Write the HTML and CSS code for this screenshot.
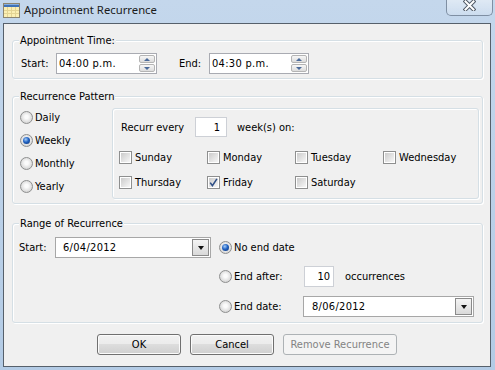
FILE: index.html
```html
<!DOCTYPE html>
<html lang="en">
<head>
  <meta charset="UTF-8">
  <title>Appointment Recurrence</title>
  <link rel="stylesheet" href="styles.css">
</head>
<body>

<div class="window">
  <div class="titlebar">
    <svg class="app-icon" width="17" height="15" viewBox="0 0 17 15">
      <rect x="0.5" y="0.5" width="16" height="14" fill="#fbefb4" stroke="#8c8571"/>
      <rect x="1" y="1" width="15" height="3" fill="#3f72b8"/>
      <rect x="1" y="1" width="15" height="1" fill="#86aede"/>
      <path d="M1 7.5H16M1 10.5H16M4.5 4V14M8.5 4V14M12.5 4V14" stroke="#e4d494" stroke-width="1"/>
    </svg>
    <span class="title">Appointment Recurrence</span>
    <div class="close-btn">
      <svg width="13" height="11" viewBox="0 0 13 11">
        <path d="M2.5 1.5L10.5 9.5M10.5 1.5L2.5 9.5" stroke="#4f5864" stroke-width="4" stroke-linecap="square"/>
        <path d="M2.5 1.5L10.5 9.5M10.5 1.5L2.5 9.5" stroke="#ffffff" stroke-width="2" stroke-linecap="square"/>
      </svg>
    </div>
  </div>

  <div class="client">
    <div class="group group-time">
      <span class="legend">Appointment Time:</span>
      <div class="time-row">
        <span class="lbl-start">Start:</span>
        <div class="spin-box">
          <span class="spin-text">04:00 p.m.</span>
          <div class="spinner"><span class="spin-btn spin-up"></span><span class="spin-btn spin-down"></span></div>
        </div>
        <span class="lbl-end">End:</span>
        <div class="spin-box spin-box-end">
          <span class="spin-text">04:30 p.m.</span>
          <div class="spinner"><span class="spin-btn spin-up"></span><span class="spin-btn spin-down"></span></div>
        </div>
      </div>
    </div>

    <div class="group group-pattern">
      <span class="legend">Recurrence Pattern</span>
      <div class="pattern-list">
        <div class="option"><span class="radio"></span>Daily</div>
        <div class="option"><span class="radio on"></span>Weekly</div>
        <div class="option"><span class="radio"></span>Monthly</div>
        <div class="option"><span class="radio"></span>Yearly</div>
      </div>
      <div class="weekly-box">
        <div class="recur-row">
          <span class="recur-label">Recurr every</span>
          <span class="num-box num-weeks">1</span>
          <span class="recur-after">week(s) on:</span>
        </div>
        <div class="days">
          <div class="day"><span class="check"></span>Sunday</div>
          <div class="day"><span class="check"></span>Monday</div>
          <div class="day"><span class="check"></span>Tuesday</div>
          <div class="day"><span class="check"></span>Wednesday</div>
          <div class="day"><span class="check"></span>Thursday</div>
          <div class="day"><span class="check">
            <svg width="9" height="9" viewBox="0 0 9 9"><path d="M1.2 4.6L3.4 7.6L7.9 0.9" fill="none" stroke="#2f4f86" stroke-width="1.6"/></svg>
          </span>Friday</div>
          <div class="day"><span class="check"></span>Saturday</div>
        </div>
      </div>
    </div>

    <div class="group group-range">
      <span class="legend">Range of Recurrence</span>
      <div class="range-start">
        <span class="lbl-range">Start:</span>
        <div class="combo combo-start"><span class="combo-text">6/04/2012</span><span class="combo-btn"></span></div>
      </div>
      <div class="range-end">
        <div class="option end-row"><span class="radio on"></span>No end date</div>
        <div class="end-row end-after">
          <div class="option end-label"><span class="radio"></span>End after:</div>
          <span class="num-box num-count">10</span>
          <span class="occ">occurrences</span>
        </div>
        <div class="end-row end-date">
          <div class="option end-label"><span class="radio"></span>End date:</div>
          <div class="combo combo-end"><span class="combo-text">8/06/2012</span><span class="combo-btn"></span></div>
        </div>
      </div>
    </div>

    <div class="buttons">
      <button class="btn btn-ok">OK</button>
      <button class="btn btn-cancel">Cancel</button>
      <button class="btn btn-remove" disabled>Remove Recurrence</button>
    </div>
  </div>
</div>

</body>
</html>
```

FILE: styles.css
```css
body {
  margin: 0;
  font-family: "DejaVu Sans Condensed", "Liberation Sans", sans-serif;
  font-size: 11px;
  color: #000;
}
.window {
  width: 495px;
  height: 370px;
  background: linear-gradient(#c4d7ec, #b3cbe5);
  display: flex;
  flex-direction: column;
}
.titlebar {
  height: 23px;
  flex-shrink: 0;
  display: flex;
  align-items: flex-start;
}
.app-icon {
  margin: 3px 0 0 3px;
}
.title {
  margin: 2px 0 0 4px;
  font-family: "Noto Sans", sans-serif;
  font-size: 11.3px;
  line-height: 16px;
  color: #1b1b1b;
}
.close-btn {
  margin-left: auto;
  margin-right: 2px;
  width: 47px;
  height: 16px;
  box-sizing: border-box;
  border: 1px solid #7f8fa3;
  border-top: none;
  border-radius: 0 0 5px 5px;
  background: linear-gradient(rgba(255,255,255,0.45), rgba(255,255,255,0.15));
  display: flex;
  justify-content: center;
}
.client {
  margin: 0 4px 0 3px;
  height: 344px;
  box-sizing: border-box;
  border: 1px solid #56606b;
  background: #f0f0f0;
  display: flex;
  flex-direction: column;
}

/* group boxes */
.group {
  position: relative;
  box-sizing: border-box;
  margin: 0 7px 0 8px;
  border: 1px solid #d5dfe5;
  border-radius: 3px;
  box-shadow: inset 1px 1px 0 #fff, 1px 1px 0 #fff;
}
.legend {
  position: absolute;
  top: -7px;
  left: 6px;
  padding: 0 1px;
  line-height: 13px;
  background: #f0f0f0;
}
.group-time {
  margin-top: 16px;
  height: 39px;
  padding: 12px 0 0 8px;
}
.group-pattern {
  margin-top: 17px;
  height: 108px;
  padding: 9px 8px 0 7px;
  display: flex;
}
.group-range {
  margin-top: 19px;
  height: 100px;
  padding: 13px 8px 0 6px;
  display: flex;
}

/* appointment time */
.time-row {
  display: flex;
  align-items: center;
  height: 21px;
}
.lbl-start {
  width: 35px;
}
.lbl-end {
  width: 30px;
  margin-left: 22px;
}
.spin-box {
  width: 101px;
  height: 21px;
  box-sizing: border-box;
  border: 1px solid #a9abb2;
  background: #fff;
  display: flex;
  align-items: center;
  padding-left: 2px;
}
.spin-box-end {
  width: 100px;
}
.spin-text {
  flex: 1;
  letter-spacing: 0.3px;
}
.spinner {
  width: 17px;
  align-self: stretch;
  box-sizing: border-box;
  padding: 1px 1px 1px 0;
  display: flex;
  flex-direction: column;
  gap: 1px;
}
.spin-btn {
  flex: 1;
  border: 1px solid #b4b4b4;
  border-radius: 2px;
  background: linear-gradient(#f7f7f7, #dcdcdc);
  display: flex;
  align-items: center;
  justify-content: center;
}
.spin-btn::after {
  content: "";
  border-left: 3px solid transparent;
  border-right: 3px solid transparent;
}
.spin-up::after {
  border-bottom: 3px solid #4a6a9a;
}
.spin-down::after {
  border-top: 3px solid #4a6a9a;
}

/* radios and checks */
.option {
  display: flex;
  align-items: center;
  gap: 2px;
}
.radio {
  width: 13px;
  height: 13px;
  box-sizing: border-box;
  flex-shrink: 0;
  border-radius: 50%;
  border: 1px solid #8e8f8f;
  background: radial-gradient(circle at 50% 45%, #fbfbfb 20%, #d2d2d2 80%);
  display: flex;
  align-items: center;
  justify-content: center;
}
.radio.on::after {
  content: "";
  width: 7px;
  height: 7px;
  border-radius: 50%;
  background: radial-gradient(circle at 40% 35%, #a6cdf6, #2163c4 45%, #0b2e6b);
}
.check {
  width: 13px;
  height: 13px;
  box-sizing: border-box;
  flex-shrink: 0;
  padding: 1px;
  border: 1px solid #8e8f8f;
  background: linear-gradient(135deg, #cbcbcb, #f7f7f7) content-box, linear-gradient(#fff, #fff);
}
.check svg {
  display: block;
  overflow: visible;
}

/* recurrence pattern */
.pattern-list {
  width: 92px;
  flex-shrink: 0;
}
.pattern-list .option {
  height: 23px;
}
.weekly-box {
  flex: 1;
  margin-top: 2px;
  height: 91px;
  box-sizing: border-box;
  padding: 8px 7px 0 7px;
  border: 1px solid #d5dfe5;
  border-radius: 3px;
  box-shadow: inset 1px 1px 0 #fff, 1px 1px 0 #fff;
}
.recur-row {
  display: flex;
  align-items: center;
  height: 20px;
  padding-left: 1px;
}
.recur-label {
  width: 74px;
}
.num-box {
  height: 20px;
  box-sizing: border-box;
  border: 1px solid #cdd0d6;
  background: #fff;
  display: flex;
  align-items: center;
  justify-content: flex-end;
}
.num-weeks {
  width: 32px;
  padding-right: 6px;
}
.recur-after {
  margin-left: 10px;
}
.days {
  margin: 10px 0 0 -1px;
  display: grid;
  grid-template-columns: repeat(4, 88px);
  grid-auto-rows: 20px;
  row-gap: 5px;
}
.day {
  display: flex;
  align-items: center;
  gap: 3px;
}

/* range of recurrence */
.range-start {
  display: flex;
  align-items: center;
  height: 21px;
}
.lbl-range {
  width: 36px;
}
.combo {
  height: 21px;
  box-sizing: border-box;
  border: 1px solid #a7a7a7;
  background: #fff;
  display: flex;
  align-items: center;
  padding-left: 7px;
}
.combo-start {
  width: 156px;
}
.combo-end {
  flex: 1;
  padding-left: 8px;
}
.combo-text {
  flex: 1;
  letter-spacing: 0.3px;
}
.combo-btn {
  width: 17px;
  align-self: stretch;
  box-sizing: border-box;
  margin: 1px;
  border: 1px solid #8a8a8a;
  background: linear-gradient(#f4f4f4, #d9d9d9);
  display: flex;
  align-items: center;
  justify-content: center;
}
.combo-btn::after {
  content: "";
  border-left: 3.5px solid transparent;
  border-right: 3.5px solid transparent;
  border-top: 4px solid #111;
}
.range-end {
  flex: 1;
  margin-left: 8px;
  display: flex;
  flex-direction: column;
}
.end-row {
  height: 21px;
  display: flex;
  align-items: center;
}
.end-after {
  margin-top: 8px;
}
.end-date {
  margin-top: 9px;
}
.end-label {
  width: 85px;
  flex-shrink: 0;
}
.end-date .end-label {
  width: 84px;
}
.num-count {
  width: 30px;
  height: 21px;
  padding-right: 3px;
}
.occ {
  margin-left: 11px;
}

/* buttons */
.buttons {
  margin-top: 11px;
  display: flex;
  justify-content: center;
  gap: 9px;
}
.btn {
  height: 21px;
  box-sizing: border-box;
  padding: 0;
  border: 1px solid #707070;
  border-radius: 3px;
  background: linear-gradient(#f2f2f2 0%, #ebebeb 50%, #dddddd 50%, #cfcfcf 100%);
  box-shadow: inset 0 0 0 1px #fbfbfb;
  font-family: inherit;
  font-size: 11px;
  color: #000;
}
.btn-ok, .btn-cancel {
  width: 84px;
}
.btn-remove {
  width: 114px;
}
.btn:disabled {
  border-color: #adb2b5;
  background: #f4f4f4;
  box-shadow: none;
  color: #838383;
}
```
